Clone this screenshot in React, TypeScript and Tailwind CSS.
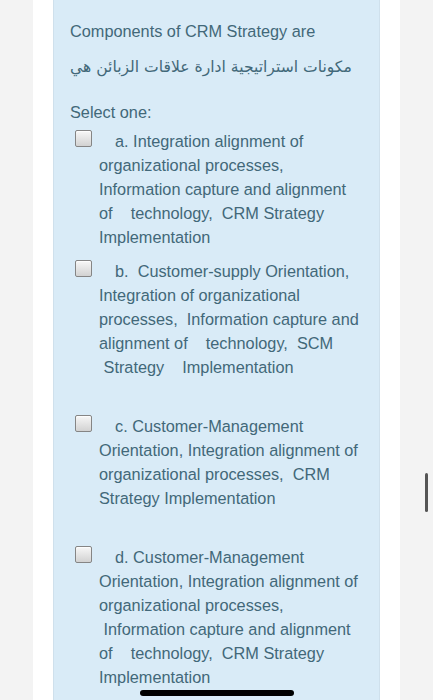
import React from "react";

const options: { lines: string[]; mt: string }[] = [
  {
    mt: "mt-[5px]",
    lines: [
      "a. Integration alignment of",
      "organizational processes,",
      "Information capture and alignment",
      "of    technology,  CRM Strategy",
      "Implementation",
    ],
  },
  {
    mt: "mt-[10px]",
    lines: [
      "b.  Customer-supply Orientation,",
      "Integration of organizational",
      "processes,  Information capture and",
      "alignment of    technology,  SCM",
      " Strategy    Implementation",
    ],
  },
  {
    mt: "mt-[35px]",
    lines: [
      "c. Customer-Management",
      "Orientation, Integration alignment of",
      "organizational processes,  CRM",
      "Strategy Implementation",
    ],
  },
  {
    mt: "mt-[35px]",
    lines: [
      "d. Customer-Management",
      "Orientation, Integration alignment of",
      "organizational processes,",
      " Information capture and alignment",
      "of    technology,  CRM Strategy",
      "Implementation",
    ],
  },
];

function Checkbox() {
  return (
    <span className="inline-block align-top mt-[1px] mr-[23px] h-[17px] w-[17px] rounded-[2px] border border-[#858585] bg-gradient-to-b from-[#f7f7f7] to-[#d2d2d2] shadow-[inset_0_1px_1px_rgba(255,255,255,0.8)]" />
  );
}

export default function App() {
  return (
    <div
      className="relative flex h-[700px] w-[433px] overflow-hidden bg-[#f3f3f3]"
      style={{ fontFamily: '"Liberation Sans", Arial, "DejaVu Sans", sans-serif' }}
    >
      <div className="ml-[33px] w-[367px] bg-white px-[20px]">
        <div className="h-full border-x border-[#cfe0ec] bg-[#d9ebf7] pl-[16px] pt-[19px] text-[16.3px] leading-[24px] text-[#426879]">
          <div>Components of CRM Strategy are</div>
          <div className="mt-[11px]">
            <span dir="rtl" className="text-[15.6px]" style={{ fontFamily: '"DejaVu Sans", sans-serif' }}>
              مكونات استراتيجية ادارة علاقات الزبائن هي
            </span>
          </div>
          <div className="mt-[21px]">Select one:</div>

          {options.map((o, i) => (
            <div key={i} className={`${o.mt} whitespace-pre pl-[29px] -indent-[24px]`}>
              <Checkbox />
              {o.lines.map((l, j) => (
                <React.Fragment key={j}>
                  {j > 0 && <br />}
                  {l}
                </React.Fragment>
              ))}
            </div>
          ))}
        </div>
      </div>

      {/* scroll indicator */}
      <div className="absolute left-[425px] top-[473px] h-[39px] w-[3px] rounded-full bg-[#555]" />
      {/* home indicator */}
      <div className="absolute left-[140px] top-[690px] h-[6px] w-[154px] rounded-full bg-black" />
    </div>
  );
}
